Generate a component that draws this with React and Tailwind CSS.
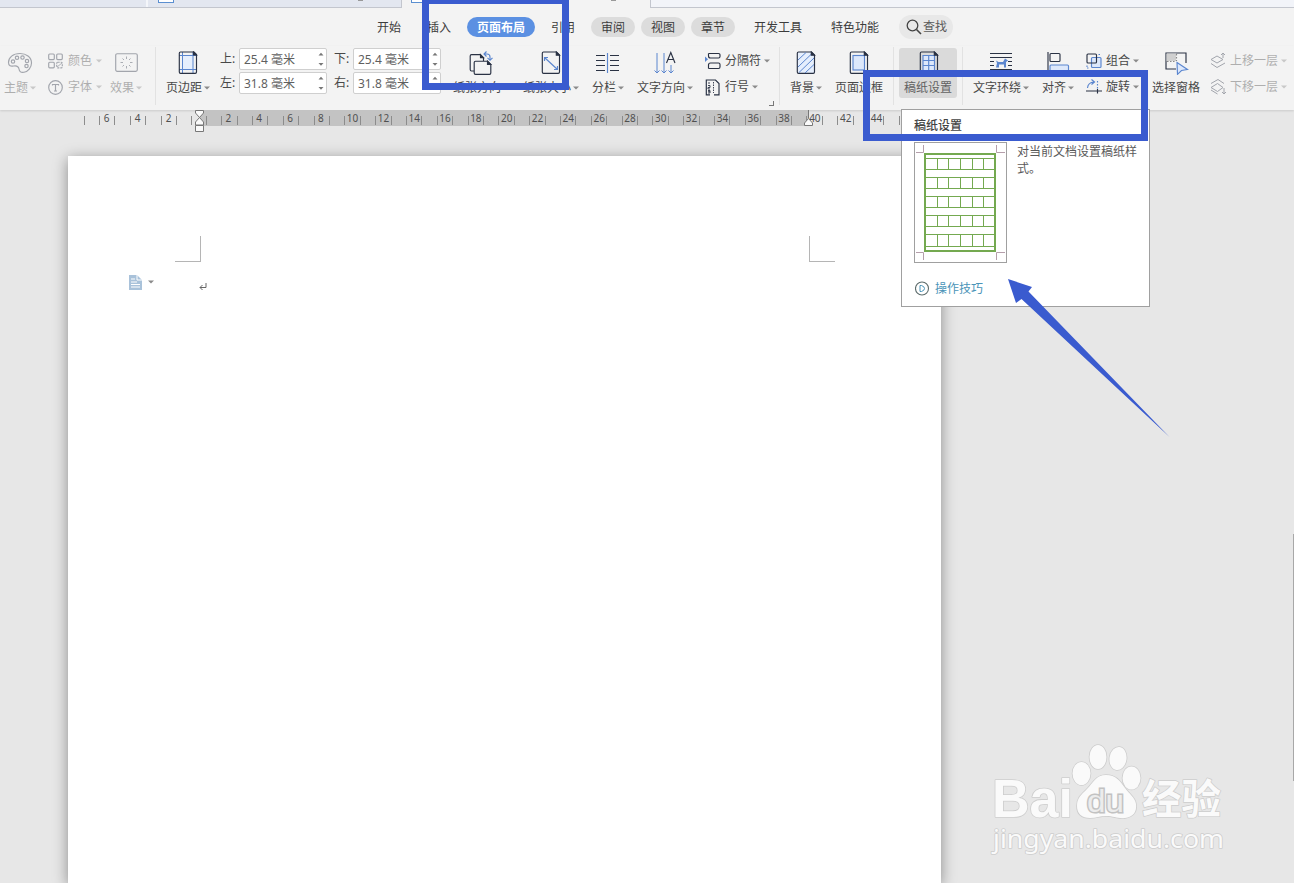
import React from "react";

const ink = "#2a3244";
const blue = "#5b86cf";
const pale = "#dde8fb";

function Caret({ className = "" }) {
  return (
    <svg width="6" height="4" viewBox="0 0 6 4" className={"shrink-0 " + className}>
      <path d="M0 0.5H6L3 3.5Z" fill="#8a8a8a" />
    </svg>
  );
}

function Icon({ w, h, children, className = "" }) {
  return (
    <svg width={w} height={h} viewBox={`0 0 ${w} ${h}`} fill="none" stroke={ink} strokeWidth="1.15" className={"block shrink-0 " + className}>
      {children}
    </svg>
  );
}

function Big({ cell, pad, label, caret, muted, children }) {
  return (
    <div className={"flex h-full shrink-0 flex-col " + cell + (muted ? " opacity-40" : "")}>
      <div className={"flex h-[32px] items-center " + pad}>{children}</div>
      <div className="flex h-[18px] items-center whitespace-nowrap">
        <span>{label}</span>
        {caret && <Caret className="ml-[2px]" />}
      </div>
    </div>
  );
}

function Small({ icon, label, muted, gap = "gap-1" }) {
  return (
    <div className={"flex h-[26px] items-center whitespace-nowrap " + gap + (muted ? " opacity-40" : "")}>
      {icon}
      <span>{label}</span>
      <Caret className="-ml-[1px]" />
    </div>
  );
}

function Divider({ cell }) {
  return (
    <div className={"h-[58px] shrink-0 " + cell}>
      <div className="h-full w-px bg-[#e2e2e2]" />
    </div>
  );
}

function Field({ label, value }) {
  return (
    <div className="flex h-[22px] items-center">
      <span className="w-[19px] whitespace-nowrap">{label}:</span>
      <div className="flex h-[22px] w-[88px] items-center justify-between rounded-[2px] border border-[#cfcfcf] bg-white pr-[2px] pl-[4px] text-[#5f5f5f]">
        <span className="pt-px whitespace-nowrap">{value} 毫米</span>
        <svg width="6" height="15" viewBox="0 0 6 15" fill="#777">
          <path d="M0.5 3.5H5.5L3 0.8ZM0.5 11H5.5L3 13.7Z" />
        </svg>
      </div>
    </div>
  );
}

function TitleStrip() {
  return (
    <div className="flex h-2 overflow-hidden bg-[#f2f4f9]">
      <div className="h-full w-[146px] border-b border-[#c3c6ce] bg-[#e3e7f0]" />
      <div className="h-full w-[2px] border-b border-[#c3c6ce] bg-[#f4f6fa]" />
      <div className="flex h-full w-[254px] border-r border-b border-[#c3c6ce] bg-[#e3e7f0] pl-[10px]">
        <div className="h-[3px] w-4 border-x border-b border-[#5b8fd0] bg-white" />
        <div className="ml-[184px] h-px w-[5px] bg-[#999]" />
      </div>
      <div className="flex h-full w-[249px] border-r border-[#c3c6ce] bg-[#f3f3f3] pl-[9px]">
        <div className="h-[3px] w-4 border-x border-b border-[#5b8fd0] bg-white" />
        <div className="ml-[184px] h-px w-[5px] bg-[#999]" />
      </div>
      <div className="h-full flex-1 border-b border-[#c3c6ce]" />
    </div>
  );
}

function MenuBar() {
  return (
    <nav className="flex h-[38px] items-center pl-[377px] leading-[20px] whitespace-nowrap text-[#3c3c3c]">
      <span className="w-[50px] pt-[2px]">开始</span>
      <span className="w-[40px] pt-[2px]">插入</span>
      <span className="flex h-5 w-[68px] items-center justify-center rounded-full bg-[#5b90e2] pt-[2px] font-bold text-white">页面布局</span>
      <span className="ml-4 w-[40px] pt-[2px]">引用</span>
      <span className="flex h-5 w-11 items-center justify-center rounded-full bg-[#dcdcdc] pt-[2px]">审阅</span>
      <span className="ml-[6px] flex h-5 w-11 items-center justify-center rounded-full bg-[#dcdcdc] pt-[2px]">视图</span>
      <span className="ml-[6px] flex h-5 w-11 items-center justify-center rounded-full bg-[#dcdcdc] pt-[2px]">章节</span>
      <span className="ml-[19px] w-[77px] pt-[2px]">开发工具</span>
      <span className="w-[68px] pt-[2px]">特色功能</span>
      <span className="flex h-6 w-[54px] items-center rounded-full bg-[#e8e8e8] pl-2">
        <Icon w={16} h={16} className="-ml-px">
          <circle cx="6.5" cy="6.5" r="5.3" stroke="#444" strokeWidth="1.3" />
          <path d="M10.5 10.5L15 15" stroke="#444" strokeWidth="1.6" />
        </Icon>
        <span className="ml-px text-[#5a5a5a]">查找</span>
      </span>
    </nav>
  );
}

function Ribbon() {
  return (
    <div className="flex h-16 pt-px pl-1 text-[#484848] shadow-[0_1px_2px_rgba(0,0,0,0.12)]">
      <Big cell="w-[44px]" pad="pl-[3px]" label="主题" caret muted>
        <Icon w={26} h={22}>
          <path d="M13 1.5C6 1.5 1.5 5.5 1.5 10.5C1.5 14 4 14.5 6.5 14C10 13.3 11.5 14.5 12 17C12.5 20 14 20.8 17 20.3C21 19.5 24.5 15.5 24.5 11C24.5 5 19 1.5 13 1.5Z" />
          <circle cx="6" cy="9.5" r="1.7" /><circle cx="10" cy="5.8" r="1.7" /><circle cx="15.5" cy="5.5" r="1.7" />
          <circle cx="20" cy="9" r="1.7" /><circle cx="19.5" cy="14" r="1.7" />
        </Icon>
      </Big>
      <div className="w-[62px] shrink-0 pt-px">
        <Small muted gap="gap-[5px]" label="颜色" icon={<Icon w={15} h={16}><rect x=".7" y="1" width="5.6" height="5.6" rx="1" /><rect x="8.7" y="1" width="5.6" height="5.6" rx="1" /><rect x=".7" y="9.2" width="5.6" height="5.6" rx="1" /><rect x="8.7" y="9.2" width="5.6" height="5.6" rx="1" strokeDasharray="2 1" /><path d="M9 14L14 10" strokeWidth=".8" /></Icon>} />
        <Small muted gap="gap-[5px]" label="字体" icon={<Icon w={15} h={15}><circle cx="7.5" cy="7.5" r="6.8" /><path d="M4.5 5.5V4.5H10.5V5.5M7.5 4.5V11M6 11H9" /></Icon>} />
      </div>
      <Big cell="w-[45px]" pad="pl-[5px]" label="效果" caret muted>
        <Icon w={23} h={19} className="-mt-[2px]">
          <rect x=".7" y=".7" width="21.6" height="17.6" rx="1.5" />
          <path d="M11.5 3.5V6M11.5 13V15.5M5.5 9.5H8M15 9.5H17.5M7.5 5.5L9 7M14 12L15.5 13.5M15.5 5.5L14 7M9 12L7.5 13.5" strokeWidth=".9" />
        </Icon>
      </Big>
      <Divider cell="w-[11px]" />
      <Big cell="w-[54px]" pad="pl-[12px]" label="页边距" caret>
        <Icon w={20} h={24}>
          <rect x="5" y="5" width="10" height="13" fill="#e6effd" stroke="none" />
          <path d="M4.5 1V22M15 1V22M1 4.5H18M1 18.5H18" stroke={blue} strokeWidth="1" />
          <path d="M2.5 1H16L18.5 3.5V21Q18.5 22.3 17.2 22.3H2.5Q1.3 22.3 1.3 21V2.3Q1.3 1 2.5 1Z" />
          <path d="M15.5 1V4H18.5Z" fill={ink} />
        </Icon>
      </Big>
      <div className="flex w-[114px] shrink-0 flex-col gap-[2px] pt-px">
        <Field label="上" value="25.4" />
        <Field label="左" value="31.8" />
      </div>
      <div className="flex w-[119px] shrink-0 flex-col gap-[2px] pt-px">
        <Field label="下" value="25.4" />
        <Field label="右" value="31.8" />
      </div>
      <Big cell="w-[70px]" pad="pl-[16px]" label="纸张方向" caret>
        <Icon w={26} h={25}>
          <path d="M5 20H2.5Q1.2 20 1.2 18.5V5Q1.2 3.6 2.5 3.6H11L14.5 7V10" />
          <path d="M11.5 3.6V6.6H14.5Z" fill={ink} />
          <path d="M6.5 10.2H18.5L21.8 13.5V22Q21.8 23.4 20.5 23.4H6.5Q5.2 23.4 5.2 22V11.5Q5.2 10.2 6.5 10.2Z" />
          <path d="M18.500 10.2V13.500H21.800Z" fill={ink} />
          <path d="M15 3H18Q21 3 21 6V9M17.5 .5L15 3L17.5 5.5M18.5 6.8L21 9.3L23.5 6.8" stroke={blue} />
        </Icon>
      </Big>
      <Big cell="w-[69px]" pad="pl-[18px]" label="纸张大小" caret>
        <Icon w={20} h={24}>
          <path d="M2.5 1H15.5L18.5 4V21Q18.5 22.3 17.2 22.3H2.5Q1.3 22.3 1.3 21V2.3Q1.3 1 2.5 1Z" />
          <path d="M15.3 1V4.2H18.5Z" fill={ink} />
          <path d="M3.5 6.5L16.5 18.5M3.5 10V6.5H7M16.5 15V18.5H13" stroke={blue} />
        </Icon>
      </Big>
      <Big cell="w-[45px]" pad="pl-[4px]" label="分栏" caret>
        <Icon w={24} h={22}>
          <path d="M0 3.5H9M0 8.5H9M0 13.5H9M0 18.5H9M14 3.5H23M14 8.5H23M14 13.5H23M14 18.5H23" />
          <path d="M11.5 1V21" stroke={blue} />
        </Icon>
      </Big>
      <Big cell="w-[68px]" pad="pl-[16px]" label="文字方向" caret>
        <Icon w={24} h={24}>
          <path d="M4 2V22M11 2V22M18 14V22M1.5 19.5L4 22L6.5 19.5M8.5 19.5L11 22L13.5 19.5M15.5 19.5L18 22L20.5 19.5" stroke={blue} strokeWidth="1" />
          <path d="M13.5 12L17.8 1.5L22 12M15 8.5H20.7" />
        </Icon>
      </Big>
      <div className="w-[74px] shrink-0 pt-px">
        <Small label="分隔符" icon={<Icon w={16} h={18}><path d="M3.5 1.5V4Q3.5 6 5.5 6H13.5Q15 6 15 4.5V3Q15 1.5 13.5 1.5H3.5M3.5 16.5V13Q3.5 11 5.5 11H13.5Q15 11 15 12.5V15Q15 16.5 13.5 16.5H3.5" /><path d="M0 4.5L3 7.2L0 10Z" fill={blue} stroke="none" /></Icon>} />
        <Small label="行号" icon={<Icon w={16} h={17}><path d="M4.500 1H10.5L14 4.5V15.8H9M4.500 1H1.300V15.800H5" /><path d="M4 3V5M3 6.500H5V8.500H3V10H5M3 11.500H5V14H3M3 12.700H5" strokeWidth=".9" /><path d="M8.5 3V14" strokeWidth=".9" strokeDasharray="1.500 1" /></Icon>} />
        <div className="flex justify-end pt-px pr-[5px]">
          <div className="h-[5px] w-[5px] border-r border-b border-[#777]" />
        </div>
      </div>
      <Divider cell="w-[11px]" />
      <Big cell="w-[45px]" pad="pl-[6px]" label="背景" caret>
        <Icon w={20} h={24}>
          <path d="M2.5 1H15.5L18.5 4V21Q18.5 22.3 17.2 22.3H2.5Q1.3 22.3 1.3 21V2.3Q1.3 1 2.5 1Z" fill="#e6effd" />
          <path d="M2 9L10 1.5M2 16L16 2.5M3 21.5L18 7M9 22L18 13.5" stroke={blue} strokeWidth="1" />
          <path d="M15.3 1V4.2H18.5Z" fill={ink} />
        </Icon>
      </Big>
      <Big cell="w-[58px]" pad="pl-[14px]" label="页面边框">
        <Icon w={20} h={24}>
          <path d="M2.5 1H15.5L18.5 4V21Q18.5 22.3 17.2 22.3H2.5Q1.3 22.3 1.3 21V2.3Q1.3 1 2.5 1Z" />
          <rect x="4" y="4.5" width="11.5" height="14.5" fill={pale} stroke={blue} />
          <path d="M15.3 1V4.2H18.5Z" fill={ink} />
        </Icon>
      </Big>
      <Divider cell="w-[6px]" />
      <div className="w-[63px] shrink-0 pt-px">
        <div className="flex h-[50px] w-[58px] rounded-[3px] bg-[#dadada] pl-[5px] text-[#626262]">
          <Big cell="w-[53px] -mt-px" pad="pl-[15px]" label="稿纸设置">
            <Icon w={20} h={24}>
              <path d="M2.5 1H15.5L18.5 4V21Q18.5 22.3 17.2 22.3H2.5Q1.3 22.3 1.3 21V2.3Q1.3 1 2.5 1Z" />
              <path d="M4 4.500H15.500V20H4ZM4 9.500H15.500M4 14.500H15.500M9.700 4.500V20" fill={pale} stroke={blue} />
              <path d="M15.3 1V4.2H18.5Z" fill={ink} />
            </Icon>
          </Big>
        </div>
      </div>
      <Divider cell="w-[11px]" />
      <Big cell="w-[69px]" pad="pl-[17px]" label="文字环绕" caret>
        <Icon w={23} h={24}>
          <path d="M0 2.5H22M0 6.5H22M0 10.5H4M18 10.5H22M0 14.5H4M18 14.5H22M0 18.5H22" />
          <path d="M6 16.500L7 12L6 9.500L8.500 11H13L15 7.500L18 9.500L16 11V16.500H14V13.500H9V16.500Z" fill={blue} stroke="none" />
        </Icon>
      </Big>
      <Big cell="w-[44px]" pad="pl-[5px]" label="对齐" caret>
        <Icon w={23} h={24}>
          <path d="M1 1V23" />
          <rect x="3" y="2.5" width="10" height="8" rx="1" />
          <rect x="3" y="14" width="18.5" height="8" rx="1" fill={pale} stroke={blue} />
        </Icon>
      </Big>
      <div className="w-[66px] shrink-0 pt-px">
        <Small label="组合" icon={<Icon w={16} h={16}><rect x="5.5" y="4.5" width="9.5" height="10" rx="1" fill={pale} stroke={blue} /><rect x="1" y="1" width="9.5" height="9" rx="1" /><path d="M12.5 1.5H15M1 12.5V15H3.5" stroke={blue} strokeDasharray="1.5 1" /></Icon>} />
        <Small label="旋转" icon={<Icon w={16} h={17}><path d="M1.5 9Q2 3.5 8 3M5.5 .5L8.5 3L5.5 5.5" stroke={blue} /><path d="M0 12H16M11.5 10V14.500" /><path d="M11.5 2V10" stroke={blue} strokeDasharray="1.5 1.5" /></Icon>} />
      </div>
      <Big cell="w-[58px]" pad="pl-[13px]" label="选择窗格">
        <Icon w={24} h={24}>
          <path d="M11 18H1V2H21V12" />
          <path d="M1.5 2.5H11V10H1.5Z" fill="#cfcfcf" stroke="none" />
          <path d="M2 10.5H11M11.5 3V10" stroke="#888" strokeDasharray="1.5 1.5" />
          <path d="M12 11.5L22.500 18.5L16.500 19.5L12.500 23.300Z" fill={pale} stroke={blue} />
        </Icon>
      </Big>
      <div className="w-[80px] shrink-0 pt-px">
        <Small muted label="上移一层" icon={<Icon w={16} h={16}><path d="M7 3L1 6.5L7 10L13 6.5ZM1 10.5L7 14.5L15 10M13 5V0M11 2L13 0L15 2" strokeWidth="1" /></Icon>} />
        <Small muted label="下移一层" icon={<Icon w={16} h={16}><path d="M7.500 4.500L1 8.500L7.500 12.500L13 8.500ZM1 4.500L8 .5L14 4.500M1 11L7.500 15M14 9V15M12 13L14 15L16 13" strokeWidth="1" /></Icon>} />
      </div>
    </div>
  );
}

function Ruler() {
  const left = [6, 4, 2];
  const right = Array.from({ length: 22 }, (_, i) => (i + 1) * 2);
  return (
    <svg width="901" height="24" viewBox="0 0 901 24" className="block">
      <rect x="199" y="0" width="609.5" height="16" fill="#c3c3c3" />
      <g stroke="#8c8c8c" strokeWidth="1">
        {Array.from({ length: 8 }, (_, i) => (
          <path key={"l" + i} d={`M${Math.floor(84 + i * 15.4) + 0.5} 6V15`} />
        ))}
        {Array.from({ length: 46 }, (_, i) => (
          <path key={"r" + i} d={`M${Math.floor(206.3 + i * 15.4) + 0.5} 6V15`} />
        ))}
      </g>
      <g fill="#505050" fontSize="10" textAnchor="middle">
        {left.map((n, i) => <text key={n} x={106.5 + i * 31} y="11.5">{n}</text>)}
        {right.map((n, i) => <text key={n} x={(n > 8 ? 229.3 : 228.4) + i * 30.82} y="11.5">{n}</text>)}
      </g>
      <g fill="#fafafa" stroke="#777">
        <path d="M195.5 .5H203.5V3L199.5 7.5L195.5 3ZM199.5 7.5L203.5 12V15H195.5V12Z" />
        <path d="M195.5 15.5H203.5V21.5H195.5Z" />
        <path d="M808.5 8.500L812.5 13V15.5H804.5V13Z" />
      </g>
      <path d="M808.5 0V8" stroke="#777" />
    </svg>
  );
}

function Page() {
  return (
    <div className="ml-[68px] h-[727px] w-[873px] bg-white shadow-[0_3px_14px_rgba(0,0,0,0.4)]">
      <div className="flex justify-between pt-[80px] pr-[106px] pl-[107px]">
        <div className="h-[26px] w-[26px] border-r border-b border-[#b5b5b5]" />
        <div className="h-[26px] w-[26px] border-b border-l border-[#b5b5b5]" />
      </div>
      <div className="flex items-center pt-[11px] pl-[61px]">
        <svg width="13" height="15" viewBox="0 0 13 15">
          <path d="M0 0H8L13 5V15H0Z" fill="#a9c2da" />
          <path d="M8 0V5H13M2 4H6M2 7H8M2 9.5H11M2 12H11" stroke="#fff" fill="none" />
        </svg>
        <Caret className="ml-[6px]" />
        <svg width="8" height="8" viewBox="0 0 8 8" className="mt-[10px] ml-[45px]" fill="none" stroke="#666">
          <path d="M7 0V4.5H1M3.5 2L1 4.5L3.5 7" />
        </svg>
      </div>
    </div>
  );
}

function PaperPreview() {
  return (
    <svg width="93" height="121" viewBox="0 0 93 121" className="block shrink-0" fill="none">
      <rect x=".5" y=".5" width="92" height="120" fill="#fff" stroke="#a0a0a0" />
      <path d="M2 10.5H9.5V3M91 10.5H82.5V3M2 110.5H9.5V118M91 110.5H82.5V118" stroke="#b59fab" />
      <rect x="11" y="12" width="70" height="97" stroke="#74a950" strokeWidth="2" />
      {[[16.5, 11], [35.5, 11], [54.5, 11], [73.5, 11], [92.5, 12]].map(([y, h]) => (
        <path key={y} d={`M11 ${y}H81M11 ${y + h}H81M23.5 ${y}V${y + h}M34.5 ${y}V${y + h}M46.5 ${y}V${y + h}M58.5 ${y}V${y + h}M69.5 ${y}V${y + h}`} stroke="#74a950" />
      ))}
    </svg>
  );
}

function Tooltip() {
  return (
    <div className="absolute top-[109px] left-[901px] flex h-[198px] w-[249px] flex-col border border-[#a0a0a0] bg-white pl-[12px] text-[#5a5a5a]">
      <div className="flex h-[32px] items-center font-medium text-[#444]">稿纸设置</div>
      <div className="flex">
        <PaperPreview />
        <p className="mt-px ml-[10px] w-[122px] leading-[17px]">对当前文档设置稿纸样式。</p>
      </div>
      <div className="mt-[16px] flex items-center gap-[5px] pl-px text-[#4a94b8]">
        <Icon w={15} h={15}>
          <circle cx="7" cy="7.5" r="6.5" stroke="#5c6b6b" strokeWidth="1.1" />
          <path d="M5 4.5V10.5H6.500Q9.500 9.5 9.500 7.5Q9.500 5.500 6.500 4.500Z" stroke="#4a94b8" strokeWidth="1" />
        </Icon>
        <span className="pt-px">操作技巧</span>
      </div>
    </div>
  );
}

function Watermark() {
  return (
    <svg width="250" height="125" viewBox="0 0 250 125" className="absolute top-[738px] left-[984px]">
      <g fill="#fafafa" stroke="#cdcdcd" strokeWidth="1.6" paintOrder="stroke" strokeLinejoin="round">
        <text x="8" y="79" fontSize="53" fontWeight="bold" textLength="81" lengthAdjust="spacingAndGlyphs" fontFamily="Liberation Sans">Bai</text>
        <ellipse cx="97.5" cy="35.5" rx="9" ry="11.5" />
        <ellipse cx="114" cy="19" rx="8.5" ry="12" />
        <ellipse cx="134" cy="20.5" rx="8.5" ry="11.5" transform="rotate(8 134 20.5)" />
        <ellipse cx="147.5" cy="40" rx="9" ry="11.5" />
        <path d="M122 37C112 37 109 45 103 51C97 57 93 60 93 68C93 76 98 80 106 80C112 80 116 78 122 78C130 78 134 81 141 80C149 79 153 74 152 66C151 59 145 56 141 50C136 43 132 37 122 37Z" />
        <text x="158" y="76" fontSize="41" fontWeight="bold" textLength="79" lengthAdjust="spacingAndGlyphs" fontFamily="Noto Sans CJK SC">经验</text>
        <text x="9" y="110" fontSize="26" textLength="231" lengthAdjust="spacingAndGlyphs" fontFamily="Noto Sans">jingyan.baidu.com</text>
      </g>
      <text x="103" y="74" fontSize="32" textLength="37" lengthAdjust="spacingAndGlyphs" fontFamily="Liberation Sans" fill="#ececec" stroke="#c2c2c2" strokeWidth="3" paintOrder="stroke">du</text>
    </svg>
  );
}

export default function App() {
  return (
    <div className="relative h-[883px] w-[1294px] overflow-hidden bg-[#e7e7e7] font-['Noto_Sans','Noto_Sans_CJK_SC',sans-serif] text-[12px] leading-[18px]">
      <header className="bg-[#f3f3f3]">
        <TitleStrip />
        <MenuBar />
        <Ribbon />
      </header>
      <main className="flex h-[773px] justify-between">
        <div>
          <Ruler />
          <div className="pt-[22px]">
            <Page />
          </div>
        </div>
        <div className="mt-[424px] h-[247px] w-px bg-[#a8a8a8]" />
      </main>
      <Tooltip />
      <Watermark />
      <div className="absolute top-0 left-[422px] h-[90px] w-[147px] border-x-[7px] border-t-[4px] border-b-[7px] border-[#3a5bcf]" />
      <div className="absolute top-[70px] left-[863px] h-[71px] w-[285px] border-[7px] border-[#3a5bcf]" />
      <svg width="170" height="165" viewBox="0 0 170 165" className="absolute top-[275px] left-[1004px]">
        <path d="M4 4L28 12L24.5 16.5L165.5 162L17.5 24L12 28Z" fill="#3a5bcf" />
      </svg>
    </div>
  );
}
